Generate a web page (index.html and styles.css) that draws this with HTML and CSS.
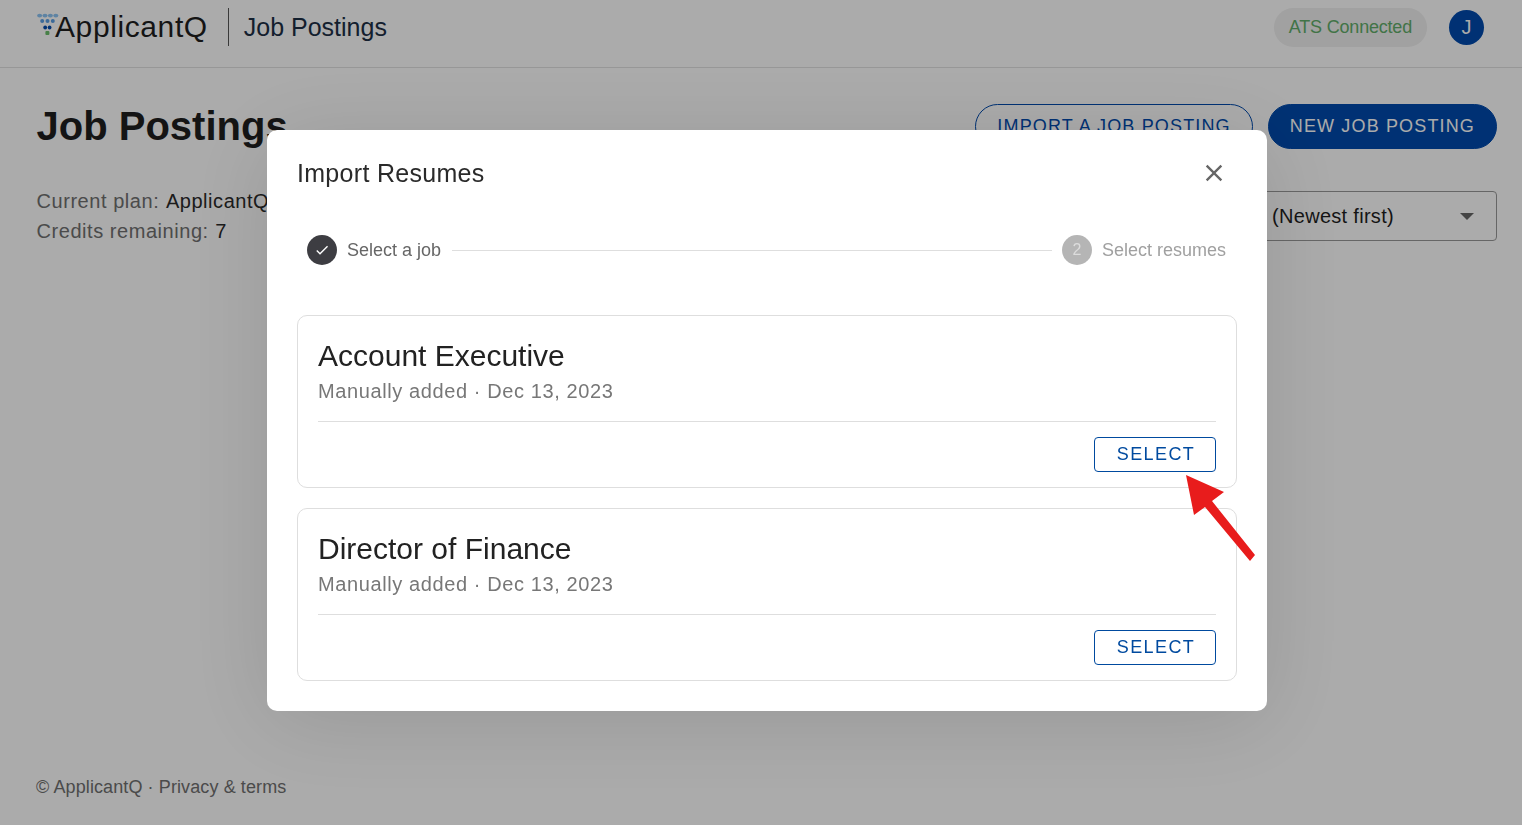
FILE: index.html
```html
<!DOCTYPE html>
<html>
<head>
  <title>ApplicantQ - Job Postings</title>
  <link rel="stylesheet" href="styles.css">
</head>
<body>
  <div id="page">
    <header id="topBar">
      <svg class="logo" width="22" height="24" viewBox="0 0 22 24">
        <ellipse cx="2.6" cy="2.6" rx="2.5" ry="1.9" fill="#8cc4f4"/>
        <ellipse cx="8" cy="2.6" rx="2.5" ry="1.9" fill="#8cc4f4"/>
        <ellipse cx="13.4" cy="2.6" rx="2.5" ry="1.9" fill="#8cc4f4"/>
        <ellipse cx="18.8" cy="2.6" rx="2.5" ry="1.9" fill="#8cc4f4"/>
        <circle cx="5.2" cy="8" r="2" fill="#5a9fe4"/>
        <circle cx="10.5" cy="8" r="2" fill="#5a9fe4"/>
        <circle cx="15.8" cy="8" r="2" fill="#5a9fe4"/>
        <circle cx="8.2" cy="14.5" r="1.9" fill="#004aad"/>
        <circle cx="12.6" cy="14.5" r="1.9" fill="#004aad"/>
        <rect x="8.4" y="18" width="4" height="4" rx="1" fill="#6cbf6c"/>
      </svg>
      <span class="brand">ApplicantQ</span>
      <span class="bar-title">Job Postings</span>
      <span class="ats-pill">ATS Connected</span>
      <span class="avatar">J</span>
    </header>

    <main id="content">
      <div class="title-row">
        <h1>Job Postings</h1>
        <button class="round-btn outline">IMPORT A JOB POSTING</button>
        <button class="round-btn filled">NEW JOB POSTING</button>
      </div>
      <div class="info-row">
        <div class="plan-info">
          <div>Current plan: <b>ApplicantQ Pro</b></div>
          <div>Credits remaining: <b>7</b></div>
        </div>
        <div class="sort-box">
          <span>Sort by: Date (Newest first)</span>
          <span class="caret"></span>
        </div>
      </div>
    </main>

    <footer id="pageFoot">© ApplicantQ · Privacy &amp; terms</footer>
  </div>

  <div id="overlay">
    <div id="dialog">
      <div class="dialog-head">
        <h2>Import Resumes</h2>
        <svg class="close-icon" width="24" height="24" viewBox="0 0 24 24">
          <path d="M19 6.41 17.59 5 12 10.59 6.41 5 5 6.41 10.59 12 5 17.59 6.41 19 12 13.41 17.59 19 19 17.59 13.41 12z"/>
        </svg>
      </div>

      <div class="stepper">
        <span class="step-dot done">
          <svg width="16" height="16" viewBox="0 0 24 24"><path d="M9 16.17 4.83 12l-1.42 1.41L9 19 21 7l-1.41-1.41z"/></svg>
        </span>
        <span class="step-label">Select a job</span>
        <span class="step-line"></span>
        <span class="step-dot todo">2</span>
        <span class="step-label muted">Select resumes</span>
      </div>

      <div class="job-card">
        <div class="job-name">Account Executive</div>
        <div class="job-meta">Manually added · Dec 13, 2023</div>
        <div class="job-actions"><button class="select-btn">SELECT</button></div>
      </div>
      <div class="job-card">
        <div class="job-name">Director of Finance</div>
        <div class="job-meta">Manually added · Dec 13, 2023</div>
        <div class="job-actions"><button class="select-btn">SELECT</button></div>
      </div>
    </div>
  </div>

  <svg id="arrow" width="80" height="95" viewBox="0 0 80 95">
    <polygon points="6,5 44,22 32,31 75,85 70,91 25,37 14,45" fill="#e81c1c"/>
  </svg>
</body>
</html>
```

FILE: styles.css
```css
* {
  box-sizing: border-box;
}

body {
  font-family: 'Liberation Sans', Arial, sans-serif;
  margin: 0;
  background-color: #fff;
  color: #1f1f1f;
}

#page {
  min-height: 825px;
  display: flex;
  flex-direction: column;
}

#topBar {
  height: 68px;
  display: flex;
  align-items: center;
  padding: 0 38px 13px 37px;
  border-bottom: 1px solid #e2e2e2;
}

.logo {
  margin-top: -4px;
  margin-right: -4px;
}

.brand {
  font-size: 30px;
  letter-spacing: 0.6px;
  padding-right: 20px;
  border-right: 1px solid #555;
  line-height: 38px;
}

.bar-title {
  font-size: 25px;
  margin-left: 15px;
  color: #1d2f45;
  flex: 1;
}

.ats-pill {
  background: #f0f0f0;
  border-radius: 20px;
  height: 39px;
  line-height: 39px;
  padding: 0 15px;
  font-size: 18px;
  letter-spacing: -0.2px;
  color: #62ad6a;
}

.avatar {
  width: 35px;
  height: 35px;
  margin-left: 22px;
  border-radius: 50%;
  background: #004aad;
  color: #fff;
  text-align: center;
  line-height: 35px;
  font-size: 20px;
}

#content {
  padding: 36px 25px 0 36.5px;
}

.title-row {
  display: flex;
  align-items: flex-start;
  gap: 15px;
}

h1 {
  flex: 1;
  margin: -1px 0 0;
  font-size: 40px;
  line-height: 46px;
}

.round-btn {
  height: 45px;
  border-radius: 23px;
  font-family: inherit;
  font-size: 18px;
  letter-spacing: 1.15px;
  padding: 0 21px;
  border: 1px solid #004aad;
}

.outline {
  background: transparent;
  color: #004aad;
}

.filled {
  background: #004aad;
  color: #fff;
}

.info-row {
  display: flex;
  justify-content: space-between;
  margin-top: 42px;
}

.plan-info {
  font-size: 20px;
  line-height: 30px;
  color: #707070;
  margin-top: -5px;
  letter-spacing: 0.55px;
}

.plan-info b {
  font-weight: normal;
  margin-left: 0.5px;
  color: #2a2a2a;
}

.sort-box {
  width: 420px;
  height: 50px;
  border: 1px solid #999;
  border-radius: 4px;
  display: flex;
  align-items: center;
  justify-content: flex-end;
  font-size: 20px;
  letter-spacing: 0.3px;
  padding-right: 22px;
}

.caret {
  margin-left: 66px;
  border-left: 7px solid transparent;
  border-right: 7px solid transparent;
  border-top: 7px solid #666;
}

#pageFoot {
  margin-top: auto;
  padding: 0 0 27px 36px;
  font-size: 18px;
  letter-spacing: 0.1px;
  color: #707070;
}

#overlay {
  position: fixed;
  inset: 0;
  background: rgba(0, 0, 0, 0.33);
  padding: 130px 0 0 267px;
}

#dialog {
  width: 1000px;
  height: 581px;
  background: #fff;
  border-radius: 10px;
  padding: 30px;
  box-shadow: 0 10px 90px rgba(0, 0, 0, 0.12);
}

.dialog-head {
  display: flex;
  justify-content: space-between;
  align-items: center;
  height: 26px;
}

h2 {
  margin: 0;
  font-size: 25px;
  font-weight: normal;
  letter-spacing: 0.3px;
  color: #2a2a2a;
}

.close-icon {
  margin-right: 9px;
  fill: #666;
  width: 28px;
  height: 28px;
}

.stepper {
  display: flex;
  align-items: center;
  margin-top: 49px;
  padding: 0 11px 0 10px;
  height: 30px;
}

.step-dot {
  width: 30px;
  height: 30px;
  border-radius: 50%;
  display: flex;
  align-items: center;
  justify-content: center;
  color: #fff;
  font-size: 16px;
}

.step-dot.done {
  background: #3d3d42;
}

.step-dot.done svg {
  fill: #fff;
}

.step-dot.todo {
  background: #b5b5b5;
  color: #dcdcdc;
}

.step-label {
  font-size: 18px;
  margin-left: 10px;
  color: #666;
}

.step-label.muted {
  color: #a0a0a0;
}

.step-line {
  flex: 1;
  height: 1px;
  background: #dedede;
  margin: 0 10px 0 11px;
}

.job-card {
  height: 173px;
  margin-top: 20px;
  border: 1px solid #dedede;
  border-radius: 10px;
  padding: 20px;
}

.stepper + .job-card {
  margin-top: 50px;
}

.job-name {
  font-size: 30px;
  line-height: 40px;
  color: #222;
}

.job-meta {
  font-size: 20px;
  line-height: 30px;
  color: #777;
  letter-spacing: 0.6px;
}

.job-actions {
  margin-top: 15px;
  padding-top: 15px;
  border-top: 1px solid #dedede;
  display: flex;
  justify-content: flex-end;
}

.select-btn {
  width: 122px;
  height: 35px;
  padding: 0 0 0 2px;
  background: #fff;
  border: 1px solid #004a9f;
  border-radius: 4px;
  color: #004a9f;
  font-family: inherit;
  font-size: 18px;
  letter-spacing: 1.4px;
}

#arrow {
  position: absolute;
  left: 1180px;
  top: 470px;
}
```
